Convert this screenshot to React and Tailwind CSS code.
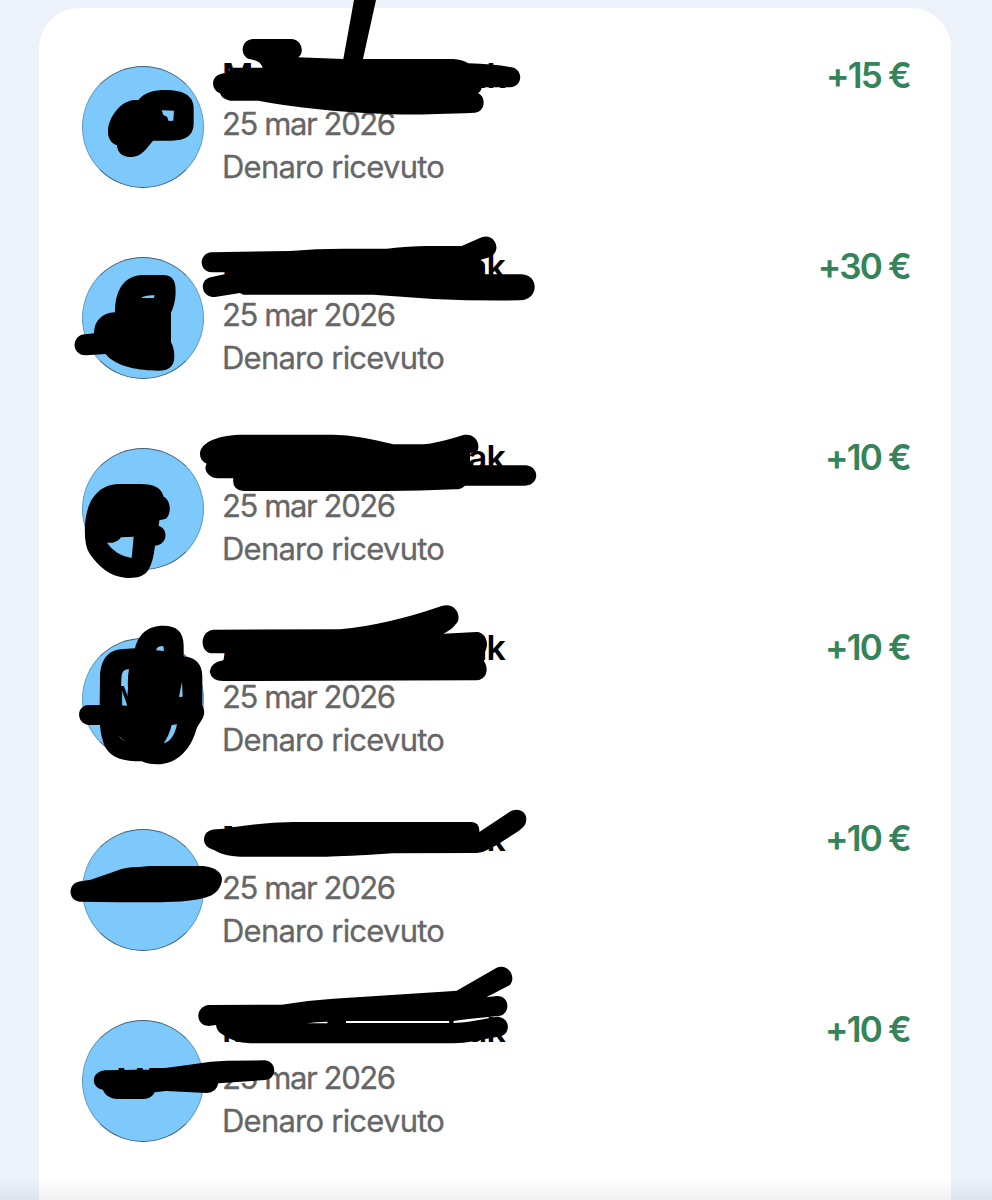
const transactions = [
  { id: 1, amount: "+15 €" },
  { id: 2, amount: "+30 €" },
  { id: 3, amount: "+10 €" },
  { id: 4, amount: "+10 €" },
  { id: 5, amount: "+10 €" },
  { id: 6, amount: "+10 €" },
];

// Marker strokes, grouped by local origin and drawn at three times page scale.
const marks = [
  {
    x: 20,
    y: 0,
    d: [
      "M264 395C264 350 305 302 342 300L355 300C375 275 405 270 435 270C485 270 521 283 521 325L521 370C521 408 495 422 455 422L399 422L382 443C365 463 350 471 330 471C306 471 292 457 291 436C273 430 264 415 264 395ZM425 331L462 332L460 362L446 363L441 350L430 345Z",
    ],
  },
  {
    x: 200,
    y: 0,
    d: [
      "M158 117L272 117C312 118 312 167 293 172L430 177L462 0L528 0L489 177L760 177Q785 178 805 190Q880 192 935 202C970 208 970 260 930 262L846 262Q843 275 834 280C858 288 858 335 825 338Q640 346 560 342Q330 332 175 302L90 302Q66 298 60 280C30 268 30 222 76 219L100 203L188 203Q182 184 158 179C118 178 118 120 158 117Z",
    ],
  },
  {
    x: 60,
    y: 225,
    d: [
      "M165 260C165 200 190 150 250 150L310 150C345 152 347 175 347 205Q345 240 333 263L333 352Q343 368 343 395C343 425 325 437 295 437C240 436 170 428 137 387L78 391C33 392 33 330 75 328L102 325C102 290 125 263 165 262ZM243 219Q258 209 284 211L282 219Z",
      "M455 82L690 78Q770 71 850 71L980 71Q1050 63 1100 63L1205 63L1265 37C1300 22 1325 70 1298 90Q1285 99 1262 104Q1272 112 1272 148L1385 148C1438 150 1438 224 1380 226Q1250 228 1120 222L940 209L550 209L540 204L465 216C418 216 418 160 455 156L497 147L497 142L455 142C415 140 415 84 455 82Z",
    ],
  },
  {
    x: 60,
    y: 420,
    d: [
      "M75 315C80 240 115 192 180 192L240 192C285 192 305 205 311 230C332 240 336 280 318 296L298 301L296 318C325 325 325 375 285 377Q280 425 265 450C250 475 215 475 195 473C150 470 115 440 88 400Q72 375 75 315ZM141 368L158 368Q174 365 183 352L221 350L215 414Q165 405 141 368Z",
      "M420 102C420 65 480 44 550 44L820 44Q900 46 1000 73L1090 73Q1130 70 1210 45C1245 38 1262 70 1253 92L1230 100L1230 136L1395 136C1440 138 1440 195 1395 197L1215 197Q1205 208 1185 208Q1080 213 980 213L550 213Q515 210 520 175L475 175C440 173 430 145 440 131Q420 122 420 102Z",
    ],
  },
  {
    x: 60,
    y: 595,
    d: [
      "M120 250C120 200 140 163 190 162L225 160C235 120 260 92 310 92C350 92 370 110 371 150L371 184Q427 190 427 245L427 330Q438 350 428 370C420 385 410 395 407 410C390 465 350 508 290 508Q265 508 245 499C190 499 155 490 135 455Q122 425 120 390L85 390C48 385 48 332 85 330L119 330ZM288 166Q290 153 310 153L312 168ZM182 330L184 250Q184 222 207 223Q202 250 204 280L200 333ZM366 260L368 305L357 306ZM335 390L351 388C345 420 330 442 311 445Q328 420 335 390ZM177 422Q185 434 196 437Q184 436 177 422Z",
      "M460 104L840 103Q980 90 1145 33C1190 20 1208 70 1187 88Q1175 105 1150 116L1250 111C1280 112 1288 150 1275 170L1272 199C1285 215 1285 252 1250 256L490 258Q455 258 449 230Q451 203 490 196L495 175L455 175C418 172 418 108 460 104Z",
    ],
  },
  {
    x: 60,
    y: 800,
    d: [
      "M62 244L92 239L170 212Q200 200 235 201L270 198L430 198Q486 205 486 240Q480 282 435 293Q390 304 340 305L300 307L175 307L60 305C22 302 22 248 62 244Z",
      "M432 120C432 95 450 87 480 87L495 86L495 78L516 78L518 82Q600 68 700 66L1235 66Q1260 68 1258 96L1345 38C1375 17 1405 38 1398 65C1395 85 1370 95 1315 133L1275 153Q1262 159 1240 159L1000 160Q850 170 800 170L540 170Q490 168 462 150Q432 142 432 120Z",
    ],
  },
  {
    x: 60,
    y: 955,
    d: [
      "M135 346L225 344L268 344L268 339L315 339L410 326Q450 319 500 317L615 316C652 320 652 372 615 375L475 385Q470 413 440 414L318 408L284 412Q275 432 250 432L170 432Q140 430 128 404C95 400 88 352 135 346Z",
      "M445 150L665 149Q740 136 820 131L1170 109L1190 107L1310 38C1345 25 1370 65 1350 90L1279 127L1310 123C1352 122 1352 180 1315 183L1225 192L1180 198L1180 204Q1225 202 1310 185C1352 185 1352 235 1325 243L1240 259Q1210 265 1180 265L570 265Q520 262 490 240Q470 230 468 210L445 213C405 210 405 156 445 150ZM740 205Q770 201 803 200L803 205ZM858 198L1168 198L1168 204L858 204Z",
      "M803 200H858V208H803ZM1168 196H1180V208H1168Z",
    ],
  },
];

function Transaction({ amount }) {
  return (
    <li className="flex h-[190.8px] items-start">
      <div className="mt-[12px] flex size-[122px] shrink-0 items-center rounded-full border border-[#5f9cc4] border-t-[#41617a] border-b-[#41617a] bg-[#7dc9fb] pl-[33px] text-[32px] font-medium text-black">
        M
      </div>
      <div className="ml-[18px] flex w-[283px] flex-col whitespace-nowrap text-[31px] leading-[43px] text-[#666666]">
        <div className="mb-[5.4px] flex justify-between text-[34px] font-semibold text-black">
          <span>M</span>
          <span className="tracking-[-0.8px]">ak</span>
        </div>
        <span className="tracking-[-1.4px] [-webkit-text-stroke:0.3px_#666666]">25 mar 2026</span>
        <span className="tracking-[-0.77px] [-webkit-text-stroke:0.3px_#666666]">Denaro ricevuto</span>
      </div>
      <span className="ml-auto whitespace-nowrap text-[35px] leading-[43px] font-semibold tracking-[-1.8px] text-[#34835a]">
        {amount}
      </span>
    </li>
  );
}

export default function App() {
  return (
    <main className="relative h-[1200px] w-[992px] overflow-hidden bg-[#edf1fa] pt-[8px] pl-[39px] font-['Inter','Liberation_Sans',sans-serif]">
      <ul className="h-[1192px] w-[912px] rounded-t-[40px] bg-white pt-[46px] pr-[41px] pl-[43px]">
        {transactions.map((t) => (
          <Transaction key={t.id} amount={t.amount} />
        ))}
      </ul>
      <svg
        className="pointer-events-none absolute inset-0"
        width="992"
        height="1200"
        viewBox="0 0 992 1200"
        aria-hidden="true"
      >
        {marks.map((m) => (
          <g key={`${m.x}-${m.y}`} transform={`translate(${m.x} ${m.y}) scale(0.33333)`}>
            {m.d.map((d) => (
              <path key={d} d={d} fillRule="evenodd" />
            ))}
          </g>
        ))}
      </svg>
      <div className="pointer-events-none absolute inset-x-0 bottom-0 h-[20px] bg-gradient-to-b from-transparent to-black/6" />
    </main>
  );
}
